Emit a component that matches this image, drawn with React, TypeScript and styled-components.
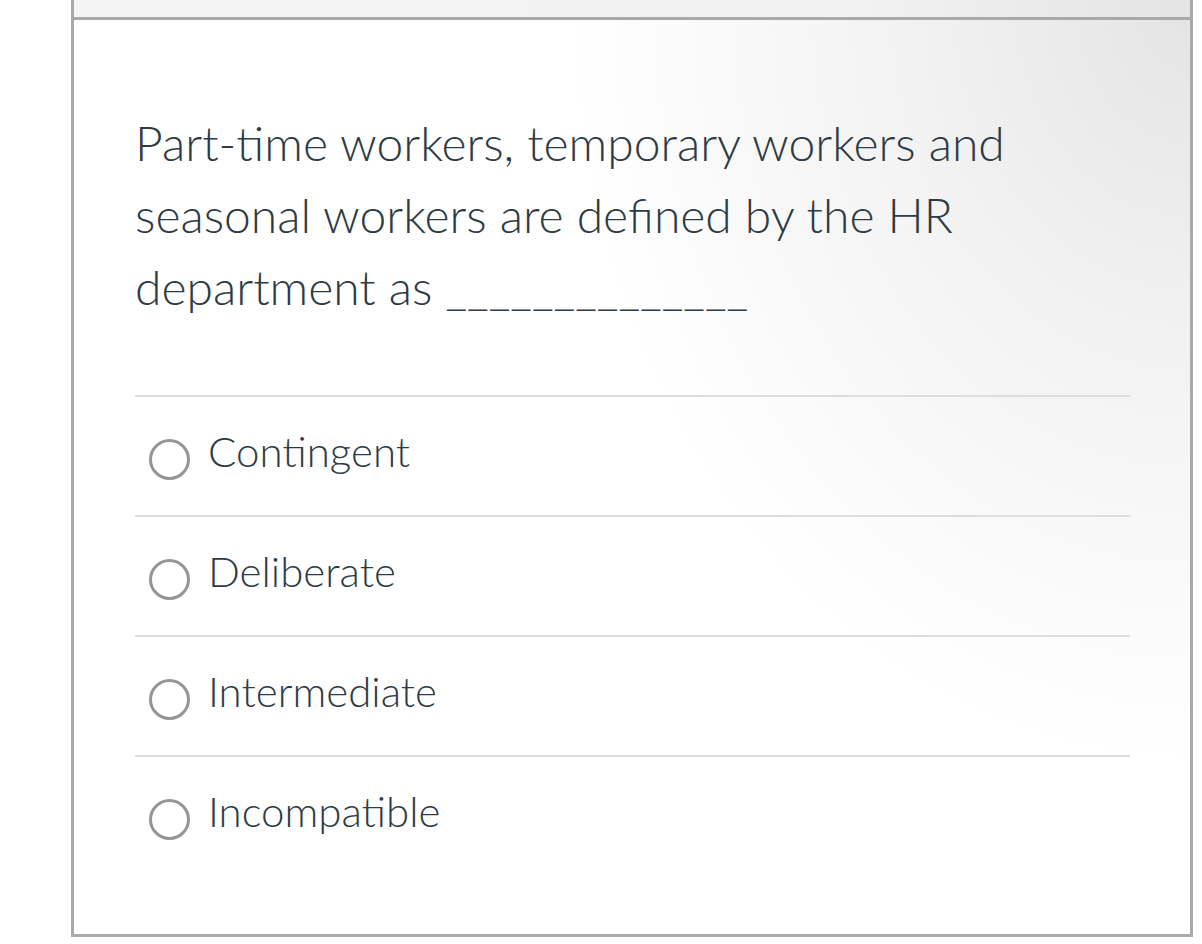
import React from 'react';
import styled, { createGlobalStyle } from 'styled-components';

const GlobalStyle = createGlobalStyle`
  html, body {
    margin: 0;
    padding: 0;
    background: #ffffff;
  }
  body {
    font-family: "Lato Light", Lato, "Open Sans", sans-serif;
    color: #2d3b45;
  }
`;

const Card = styled.div`
  box-sizing: border-box;
  width: 1122px;
  margin-left: 71px;
  border: 3px solid #a9a9a9;
  border-top: none;
  background: radial-gradient(ellipse 620px 760px at 100% 0%, #e4e4e4 0%, #f2f2f2 45%, #ffffff 100%);
`;

const CardHeader = styled.div`
  height: 17px;
  border-bottom: 3px solid #a9a9a9;
  background: linear-gradient(90deg, #f4f4f4 0%, #f2f2f2 70%, #e4e4e4 100%);
`;

const CardBody = styled.div`
  padding: 87px 60px 59px 61px;
`;

const Question = styled.p`
  margin: 0 0 72px;
  font-size: 48px;
  font-weight: 300;
  line-height: 72px;
`;

const Answers = styled.div`
  display: flex;
  flex-direction: column;
`;

const Answer = styled.label`
  display: flex;
  align-items: center;
  height: 118px;
  padding-left: 14px;
  border-top: 2px solid #dedede;
  box-sizing: content-box;
  cursor: pointer;
`;

const Radio = styled.span`
  box-sizing: border-box;
  flex: none;
  width: 41px;
  height: 41px;
  border: 3px solid #959595;
  border-radius: 50%;
  margin-right: 18px;
  margin-top: 6px;
`;

const AnswerText = styled.span`
  font-size: 42px;
  font-weight: 300;
  line-height: 1;
  margin-top: -10px;
`;

const answers = ['Contingent', 'Deliberate', 'Intermediate', 'Incompatible'];

const App = () => {
  return (
    <>
      <GlobalStyle />
      <Card>
        <CardHeader />
        <CardBody>
          <Question>
            Part-time workers, temporary workers and seasonal workers are defined by the HR
            department as ______________
          </Question>
          <Answers>
            {answers.map((a) => (
              <Answer key={a}>
                <Radio />
                <AnswerText>{a}</AnswerText>
              </Answer>
            ))}
          </Answers>
        </CardBody>
      </Card>
    </>
  );
};

export default App;
